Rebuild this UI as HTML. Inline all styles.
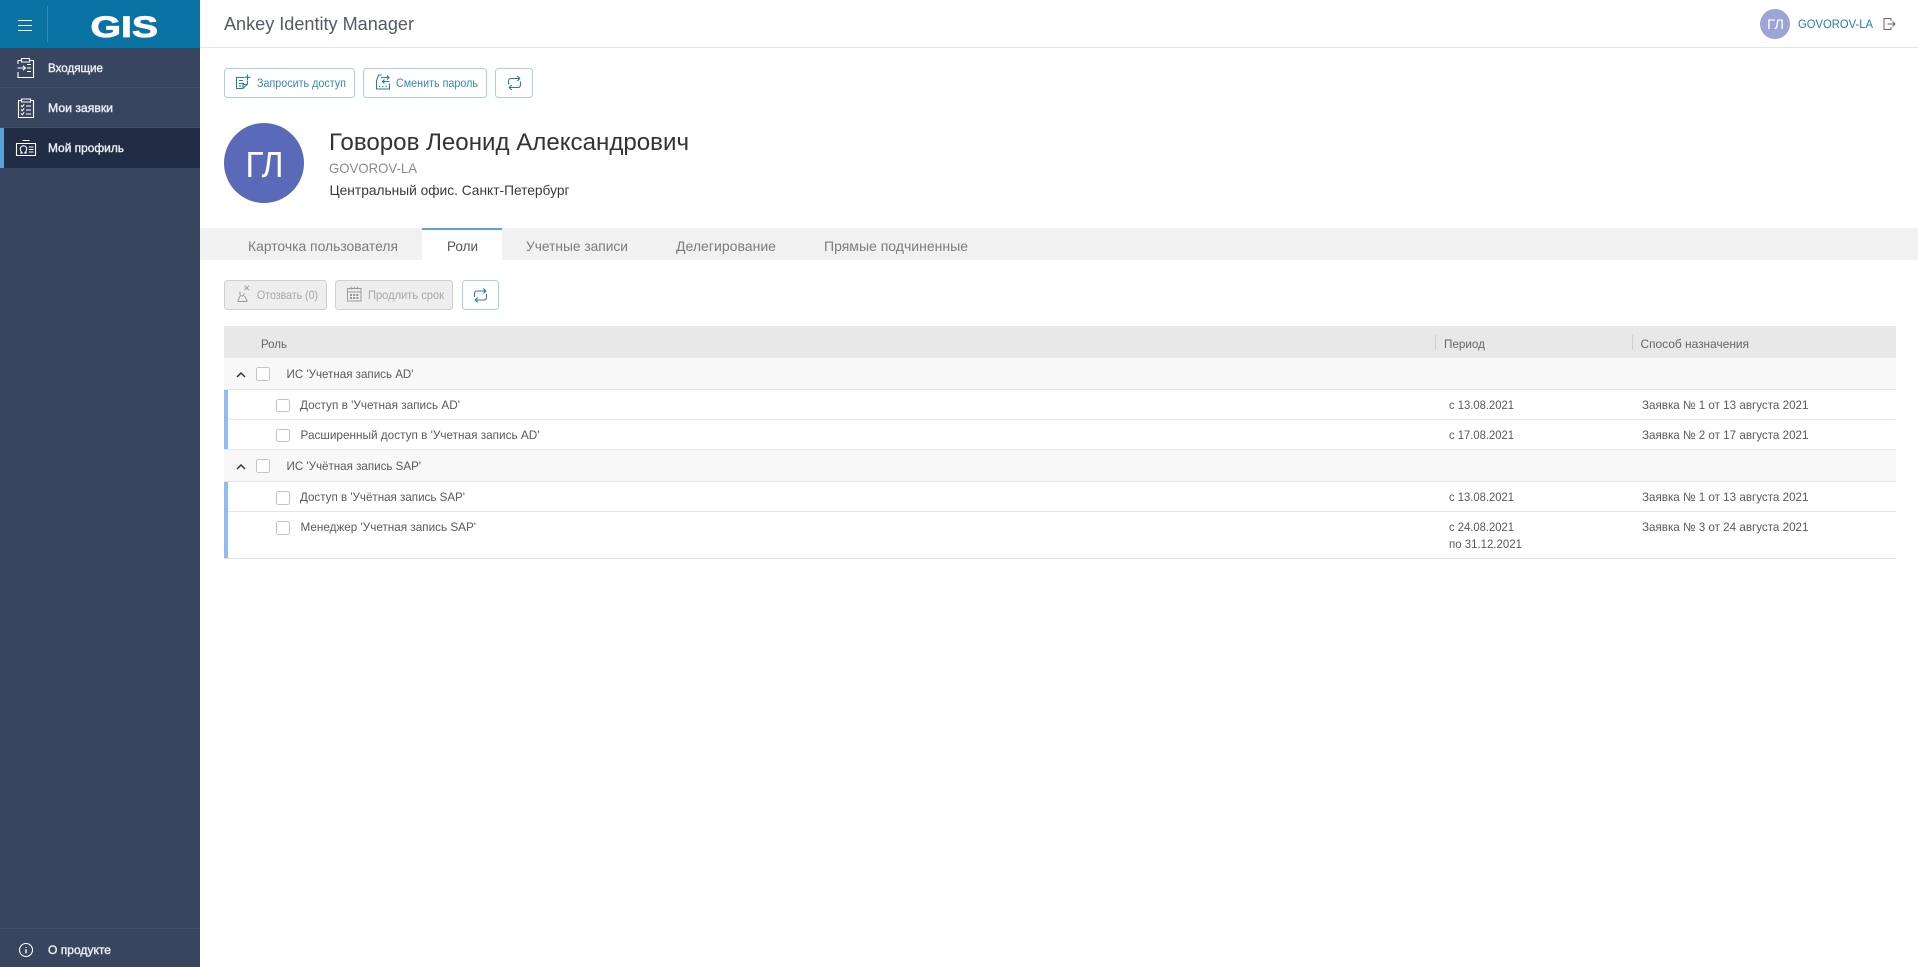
<!DOCTYPE html>
<html lang="ru">
<head>
<meta charset="utf-8">
<title>Ankey Identity Manager</title>
<style>
html,body{margin:0;padding:0;width:1918px;height:967px;overflow:hidden;background:#fff}
svg{position:absolute;left:0;top:0;display:block}
text{font-family:"Liberation Sans","Noto Sans CJK SC",sans-serif;font-size:12px;fill:#5a5a5a;white-space:pre}
.menu{fill:#e9edf2;stroke:#e9edf2;stroke-width:.4px;font-size:12px}
.tab{fill:#7c7c7c;font-size:14px}
.btn{fill:#3a86aa;font-size:12px}
.dis{fill:#a6a6a6;font-size:12px}
.th{fill:#666}
.ic{fill:none;stroke:#fff;stroke-width:1.1}
.ib{fill:none;stroke:#2a7ba3;stroke-width:1.1}
.ig{fill:none;stroke:#9a9a9a;stroke-width:1}
.cb{fill:#fff;stroke:#c4c4c4;stroke-width:1}
</style>
</head>
<body>
<svg width="1918" height="967" viewBox="0 0 1918 967" xmlns="http://www.w3.org/2000/svg">
<!-- sidebar -->
<rect x="0" y="0" width="200" height="967" fill="#37465e"/>
<rect x="0" y="0" width="200" height="48" fill="#0a73a3"/>
<rect x="47" y="6" width="1" height="36" fill="#2f8ab5"/>
<path d="M18 20.500H32M18 25.500H32M18 30.500H32" stroke="#fff" stroke-width="1" fill="none"/>
<text x="90.500" y="37" textLength="67.500" lengthAdjust="spacingAndGlyphs" style="font-size:30px;font-weight:bold;fill:#fff;stroke:#fff;stroke-width:.8px">GIS</text>
<rect x="0" y="87" width="200" height="1" fill="#425068"/>
<rect x="0" y="127" width="200" height="1" fill="#425068"/>
<rect x="0" y="128" width="200" height="40" fill="#202d44"/>
<rect x="0" y="128" width="4" height="40" fill="#5ba2d6"/>
<rect x="0" y="928" width="200" height="1" fill="#425068"/>

<!-- inbox icon -->
<path class="ic" d="M18 64V60.500H21.500M29.500 60.500H33.500V77.500H18V72M21.500 58.500H29.500V62H21.500ZM17.500 68H25M23 65.800L25.400 68L23 70.200M27 64.500H31M27 68H31M27 71.500H31"/>
<text class="menu" x="48" y="72" textLength="55" lengthAdjust="spacingAndGlyphs">Входящие</text>
<!-- requests icon -->
<path class="ic" d="M21.500 100.500H18.500V117.500H33.500V100.500H30.500M21.500 99H30.500V102H21.500ZM21 105.500L22.200 106.800L24.200 104.300M21 109.500L22.200 110.800L24.200 108.300M21 113.500L22.200 114.800L24.200 112.300M26 106H31M26 110H31M26 114H31"/>
<text class="menu" x="48" y="112" textLength="65" lengthAdjust="spacingAndGlyphs">Мои заявки</text>
<!-- profile icon -->
<path class="ic" d="M16.500 143.500H35.500V155.500H16.500ZM22.500 140.500H29.500M20 153H22.200C21 151.500 20.300 150.500 20.300 149C20.300 147 21.700 145.800 23.500 145.800C25.300 145.800 26.700 147 26.700 149C26.700 150.500 26 151.500 24.800 153H27M28.800 147H33.500M28.800 149.500H33.500M28.800 152H33.500"/>
<text class="menu" x="48" y="152" textLength="76" lengthAdjust="spacingAndGlyphs">Мой профиль</text>
<!-- about -->
<circle class="ic" cx="26" cy="950" r="6.500" stroke-width="1.200"/>
<path d="M26 947V947.800M26 949.300V953.400" stroke="#fff" stroke-width="1.400" fill="none"/>
<text class="menu" x="48" y="954" textLength="63" lengthAdjust="spacingAndGlyphs">О продукте</text>

<!-- header -->
<rect x="200" y="47" width="1718" height="1" fill="#e3e6ea"/>
<text x="224" y="30" textLength="190" lengthAdjust="spacingAndGlyphs" style="font-size:18px;fill:#515c68">Ankey Identity Manager</text>
<circle cx="1775" cy="24" r="15" fill="#9da4d6"/>
<text x="1767" y="29" textLength="17" lengthAdjust="spacingAndGlyphs" style="font-size:14px;fill:#fff">ГЛ</text>
<text x="1798" y="28" textLength="75" lengthAdjust="spacingAndGlyphs" style="font-size:12px;fill:#2a7ca5">GOVOROV-LA</text>
<path d="M1891 21V18.500H1884V29.500H1891V27M1887.500 24H1895M1892.500 21.500L1895 24L1892.500 26.500" fill="none" stroke="#666" stroke-width="1"/>

<!-- top action buttons -->
<rect x="224.500" y="68.500" width="130" height="29" rx="3" fill="#fff" stroke="#a9d0e0"/>
<path class="ib" d="M244 77.500H236.500V88.500H243L247.500 84V80.500M243 88.500V84.500H247.500M239 80.500H243M239 83.500H244M239 86H241M247.500 74.500V80M244.500 77.300H250.500"/>
<text class="btn" x="257" y="87" textLength="89" lengthAdjust="spacingAndGlyphs">Запросить доступ</text>
<rect x="363.500" y="68.500" width="123" height="29" rx="3" fill="#fff" stroke="#a9d0e0"/>
<path class="ib" d="M376.500 81V89H389.500V83.500M376.500 81L378.500 75H381.500M381 77.500H389M387 75.500L389 77.500L387 79.500M389.500 81.500H382.500M384.500 79.500L382.500 81.500L384.500 83.500"/>
<path d="M379 86.500H387" stroke="#2a7ba3" stroke-width="1.200" stroke-dasharray="1.200 2" fill="none"/>
<text class="btn" x="396" y="87" textLength="82" lengthAdjust="spacingAndGlyphs">Сменить пароль</text>
<rect x="495.500" y="68.500" width="37" height="29" rx="3" fill="#fff" stroke="#a9d0e0"/>
<path class="ib" d="M508.500 84.500V81.500C508.500 79.500 509.500 78.500 511 78.500H519.800M517.300 76L519.800 78.500L517.300 81M520.500 81.500V84.500C520.500 86.500 519.500 87.500 518 87.500H509.200M511.700 85L509.200 87.500L511.700 90"/>

<!-- profile -->
<circle cx="264" cy="163" r="40" fill="#5a69b8"/>
<text x="245.500" y="177" textLength="38" lengthAdjust="spacingAndGlyphs" style="font-size:36px;fill:#fff">ГЛ</text>
<text x="329" y="150" textLength="360" lengthAdjust="spacingAndGlyphs" style="font-size:24px;fill:#333">Говоров Леонид Александрович</text>
<text x="329" y="173" textLength="88" lengthAdjust="spacingAndGlyphs" style="font-size:14px;fill:#8a8a8a">GOVOROV-LA</text>
<text x="329.500" y="195" textLength="240" lengthAdjust="spacingAndGlyphs" style="font-size:14px;fill:#3a3a3a">Центральный офис. Санкт-Петербург</text>

<!-- tabs -->
<rect x="200" y="228" width="1718" height="32" fill="#f1f1f1"/>
<rect x="422" y="228" width="80" height="32" fill="#fff"/>
<rect x="422" y="228" width="80" height="2" fill="#5ba2d0"/>
<text class="tab" x="248" y="251" textLength="150" lengthAdjust="spacingAndGlyphs">Карточка пользователя</text>
<text class="tab" x="447" y="251" textLength="31" lengthAdjust="spacingAndGlyphs" style="fill:#555">Роли</text>
<text class="tab" x="526" y="251" textLength="102" lengthAdjust="spacingAndGlyphs">Учетные записи</text>
<text class="tab" x="676" y="251" textLength="100" lengthAdjust="spacingAndGlyphs">Делегирование</text>
<text class="tab" x="824" y="251" textLength="144" lengthAdjust="spacingAndGlyphs">Прямые подчиненные</text>

<!-- role toolbar -->
<rect x="224.500" y="280.500" width="102" height="29" rx="3" fill="#eee" stroke="#d0d0d0"/>
<path class="ig" d="M244.500 285.700L249 290.200M249 285.700L244.500 290.200M240 291.500V294.500C240 295.500 241 296 242.300 296C243.500 296 244 294.500 244 293M240 296L238 300.500V301.500H247V300.500L244.500 296"/>
<text class="dis" x="257" y="299" textLength="61" lengthAdjust="spacingAndGlyphs">Отозвать (0)</text>
<rect x="335.500" y="280.500" width="117" height="29" rx="3" fill="#eee" stroke="#d0d0d0"/>
<path class="ig" d="M347.500 288.500H361V301H347.500ZM347.500 292H361M351 286.500V289.500M354.250 286.500V288M357.500 286.500V289.500"/>
<path d="M350 295H358.500M350 298H358.500" stroke="#777" stroke-width="1.600" stroke-dasharray="2 1.200" fill="none"/>
<text class="dis" x="368" y="299" textLength="76" lengthAdjust="spacingAndGlyphs">Продлить срок</text>
<rect x="462.500" y="280.500" width="36" height="29" rx="3" fill="#fff" stroke="#a9d0e0"/>
<path class="ib" d="M474.500 297V294C474.500 292 475.500 291 477 291H485.800M483.300 288.500L485.800 291L483.300 293.500M486.500 294V297C486.500 299 485.500 300 484 300H475.200M477.700 297.500L475.200 300L477.700 302.500"/>

<!-- table header -->
<rect x="224" y="326" width="1672" height="32" fill="#e8e8e8"/>
<text class="th" x="261" y="348" textLength="26" lengthAdjust="spacingAndGlyphs">Роль</text>
<rect x="1435" y="335" width="1" height="15" fill="#cfcfcf"/>
<text class="th" x="1444" y="348" textLength="41" lengthAdjust="spacingAndGlyphs">Период</text>
<rect x="1632" y="335" width="1" height="15" fill="#cfcfcf"/>
<text class="th" x="1640.500" y="348" textLength="108.500" lengthAdjust="spacingAndGlyphs">Способ назначения</text>

<!-- groups -->
<rect x="224" y="358" width="1672" height="31" fill="#f8f8f8"/>
<rect x="224" y="449" width="1672" height="32" fill="#f8f8f8"/>
<rect x="224" y="389" width="1672" height="1" fill="#e2e6ea"/>
<rect x="224" y="419" width="1672" height="1" fill="#e2e6ea"/>
<rect x="224" y="449" width="1672" height="1" fill="#e2e6ea"/>
<rect x="224" y="481" width="1672" height="1" fill="#e2e6ea"/>
<rect x="224" y="511" width="1672" height="1" fill="#e2e6ea"/>
<rect x="224" y="558" width="1672" height="1" fill="#e2e6ea"/>
<rect x="224" y="390" width="4" height="59" fill="#90bcf2"/>
<rect x="224" y="482" width="4" height="76" fill="#90bcf2"/>

<path d="M237 377L241 373L245 377" fill="none" stroke="#333" stroke-width="1.500"/>
<rect class="cb" x="256.500" y="367.500" width="13" height="13" rx="2"/>
<text x="286.500" y="378" textLength="127" lengthAdjust="spacingAndGlyphs">ИС 'Учетная запись AD'</text>

<rect class="cb" x="276.500" y="399.500" width="13" height="12" rx="2"/>
<text x="300" y="409" textLength="160" lengthAdjust="spacingAndGlyphs">Доступ в 'Учетная запись AD'</text>
<text x="1449" y="409" textLength="65" lengthAdjust="spacingAndGlyphs">с 13.08.2021</text>
<text x="1642" y="409" textLength="166.500" lengthAdjust="spacingAndGlyphs">Заявка № 1 от 13 августа 2021</text>

<rect class="cb" x="276.500" y="429.500" width="13" height="12" rx="2"/>
<text x="300.500" y="439" textLength="239" lengthAdjust="spacingAndGlyphs">Расширенный доступ в 'Учетная запись AD'</text>
<text x="1449" y="439" textLength="65" lengthAdjust="spacingAndGlyphs">с 17.08.2021</text>
<text x="1642" y="439" textLength="166.500" lengthAdjust="spacingAndGlyphs">Заявка № 2 от 17 августа 2021</text>

<path d="M237 469L241 465L245 469" fill="none" stroke="#333" stroke-width="1.500"/>
<rect class="cb" x="256.500" y="459.500" width="13" height="13" rx="2"/>
<text x="286.500" y="470" textLength="134.500" lengthAdjust="spacingAndGlyphs">ИС 'Учётная запись SAP'</text>

<rect class="cb" x="276.500" y="491.500" width="13" height="13" rx="2"/>
<text x="300" y="501" textLength="165" lengthAdjust="spacingAndGlyphs">Доступ в 'Учётная запись SAP'</text>
<text x="1449" y="501" textLength="65" lengthAdjust="spacingAndGlyphs">с 13.08.2021</text>
<text x="1642" y="501" textLength="166.500" lengthAdjust="spacingAndGlyphs">Заявка № 1 от 13 августа 2021</text>

<rect class="cb" x="276.500" y="521.500" width="13" height="13" rx="2"/>
<text x="300.500" y="531" textLength="175.500" lengthAdjust="spacingAndGlyphs">Менеджер 'Учетная запись SAP'</text>
<text x="1449" y="531" textLength="65" lengthAdjust="spacingAndGlyphs">с 24.08.2021</text>
<text x="1449" y="548" textLength="73" lengthAdjust="spacingAndGlyphs">по 31.12.2021</text>
<text x="1642" y="531" textLength="166.500" lengthAdjust="spacingAndGlyphs">Заявка № 3 от 24 августа 2021</text>
</svg>
</body>
</html>
